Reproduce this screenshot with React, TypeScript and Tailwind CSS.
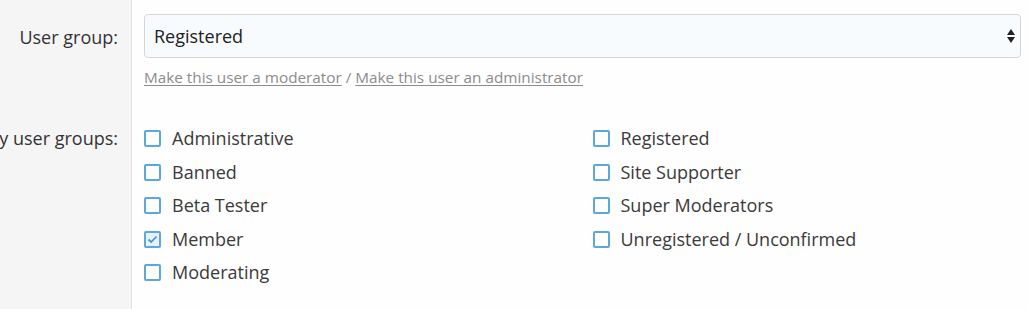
import { useState } from 'react';

const LEFT_GROUPS = ['Administrative', 'Banned', 'Beta Tester', 'Member', 'Moderating'];
const RIGHT_GROUPS = ['Registered', 'Site Supporter', 'Super Moderators', 'Unregistered / Unconfirmed'];

function Check({ label, initial }: { label: string; initial?: boolean }) {
  const [on, setOn] = useState(!!initial);
  return (
    <label className="flex items-center h-[33.5px] cursor-pointer" onClick={() => setOn(!on)}>
      <span
        className={`w-[17px] h-[17px] rounded-[2px] border-2 border-[#5ba8de] flex items-center justify-center ${
          on ? 'bg-[#e6f1fa]' : 'bg-white'
        }`}
      >
        {on && (
          <svg width="11" height="9" viewBox="0 0 11 9" fill="none">
            <path d="M1.5 4.5 L4.2 7 L9.5 1.5" stroke="#4a95cf" strokeWidth="1.8" />
          </svg>
        )}
      </span>
      <span className="ml-[11px] text-[18px] text-[#3a3a3a]">{label}</span>
    </label>
  );
}

export default function App() {
  return (
    <div className="w-[1028px] h-[309px] overflow-hidden bg-[#fefefe] font-['Open_Sans',sans-serif]">
      <div className="flex h-full">
        {/* Label column */}
        <div className="w-[132px] shrink-0 bg-[#f5f5f5] border-r border-[#e4e4e4] flex flex-col">
          <div className="h-[74px] pt-[24px] pr-[13px] flex justify-end whitespace-nowrap text-[18px] text-[#333] leading-[26px]">
            User group:
          </div>
          <div className="mt-[51px] pr-[13px] flex justify-end whitespace-nowrap text-[18px] text-[#333] leading-[26px]">
            Secondary user groups:
          </div>
        </div>

        {/* Fields */}
        <div className="flex-1 pl-[12px] pr-[7px] pt-[14px]">
          <div className="relative h-[44px] rounded-[4px] border border-[#d6d6d6] bg-[#f8fbfe] flex items-center pl-[9px]">
            <span className="text-[18px] text-[#222]">Registered</span>
            <svg className="absolute right-[4px] top-[13px]" width="10" height="16" viewBox="0 0 10 16">
              <path d="M5 1 L9 7 L1 7 Z" fill="#222" />
              <path d="M5 15 L9 9 L1 9 Z" fill="#222" />
            </svg>
          </div>
          <div className="mt-[8px] text-[15.3px] text-[#8c8c8c]">
            <a className="underline underline-offset-2">Make this user a moderator</a>
            <span> / </span>
            <a className="underline underline-offset-2">Make this user an administrator</a>
          </div>

          <div className="mt-[33px] grid grid-cols-2 gap-x-[12px]">
            <div className="flex flex-col">
              {LEFT_GROUPS.map((g) => (
                <Check key={g} label={g} initial={g === 'Member'} />
              ))}
            </div>
            <div className="flex flex-col pl-[4px]">
              {RIGHT_GROUPS.map((g) => (
                <Check key={g} label={g} />
              ))}
            </div>
          </div>
        </div>
      </div>
    </div>
  );
}
